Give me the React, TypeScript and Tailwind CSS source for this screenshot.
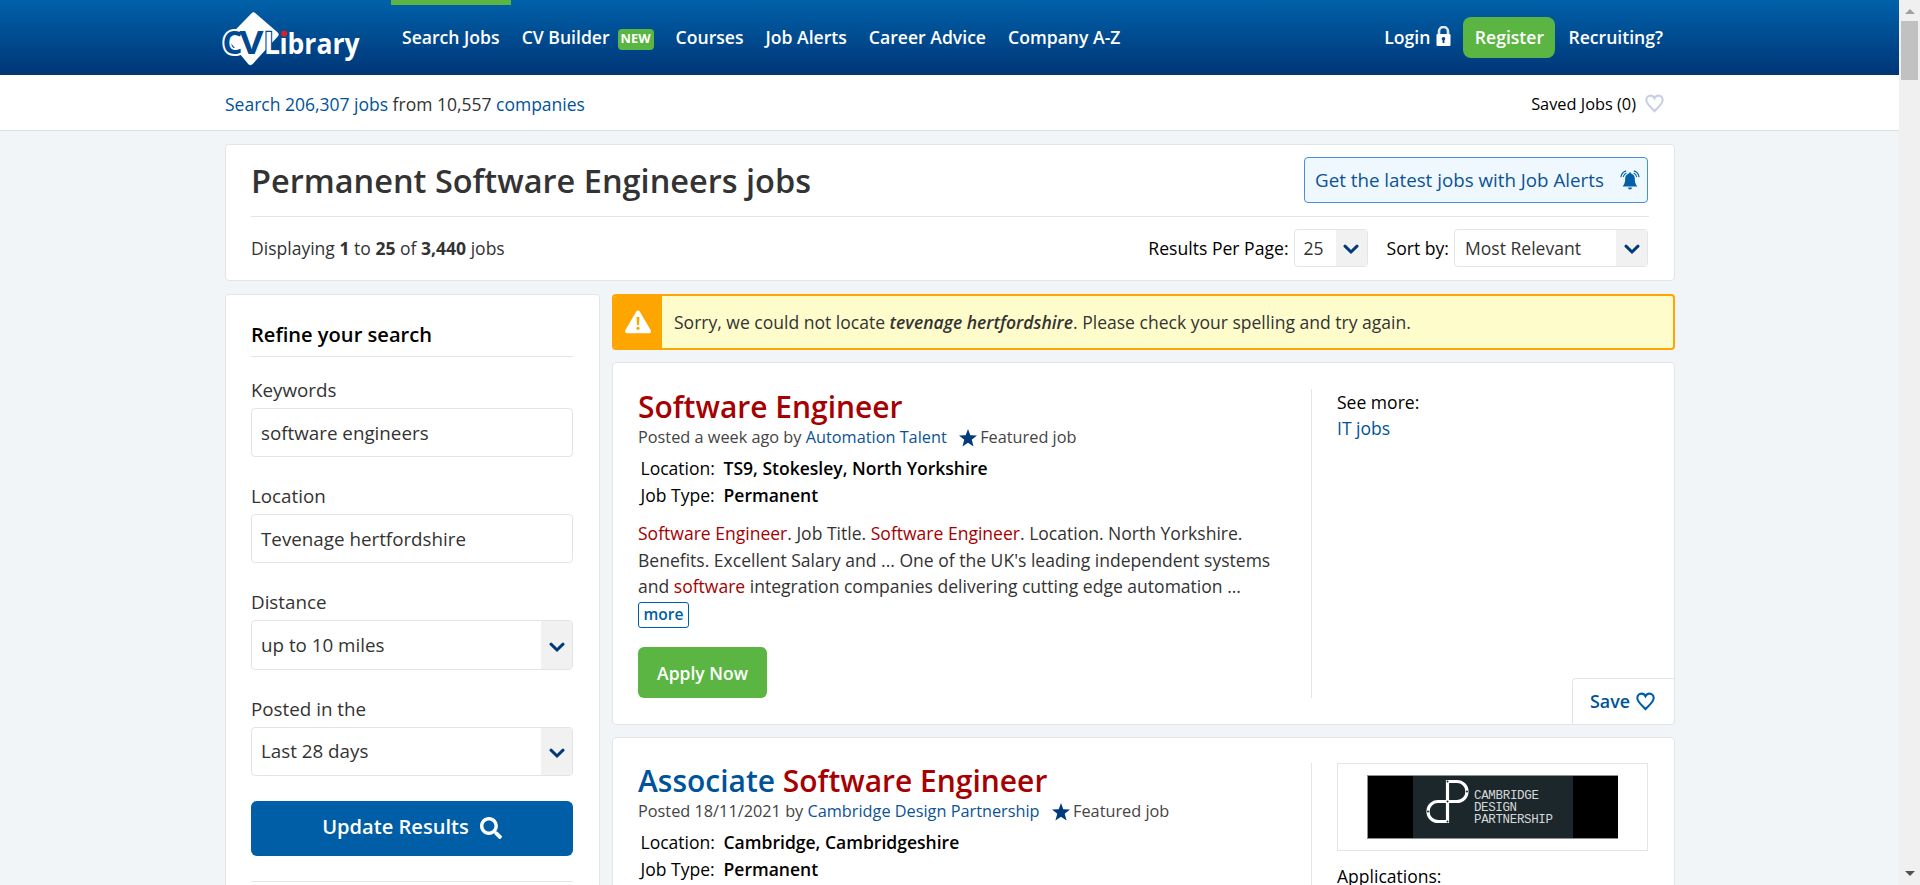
import type { ReactNode } from 'react';
import { FaSearch } from 'react-icons/fa';

function Logo() {
  return (
    <svg width="144" height="62" viewBox="0 0 144 62" className="block" fontFamily="'Open Sans', sans-serif">
      <path d="M32.5 8.5 L54.5 27.5 L29.5 55 L10 31.5 Z" fill="#fff" stroke="#fff" strokeWidth="6" strokeLinejoin="round" />
      <text x="1.5" y="46.5" fontSize="32" fontWeight="700" textLength="20" lengthAdjust="spacingAndGlyphs" fill="#00498f" stroke="#fff" strokeWidth="4" paintOrder="stroke">C</text>
      <text x="18.5" y="46.5" fontSize="32" fontWeight="700" textLength="24" lengthAdjust="spacingAndGlyphs" fill="#00498f">V</text>
      <text x="43" y="46.5" fontSize="30" fontWeight="700" textLength="16" lengthAdjust="spacingAndGlyphs" fill="#fff" stroke="#004a90" strokeWidth="2.5" paintOrder="stroke">L</text>
      <text x="58.5" y="46.5" fontSize="28" fontWeight="700" textLength="80" lengthAdjust="spacingAndGlyphs" fill="#fff">ibrary</text>
      <circle cx="63.2" cy="26.6" r="3.6" fill="#e01e26" stroke="#004e93" strokeWidth="1" />
    </svg>
  );
}

function LockIcon() {
  return (
    <svg width="15" height="20" viewBox="0 0 15 20" className="block">
      <path d="M3 9 V5.5 a4.5 4.5 0 0 1 9 0 V9" fill="none" stroke="#dfe9f4" strokeWidth="2.6" />
      <rect x="0.5" y="8" width="14" height="12" rx="1.2" fill="#fff" />
      <circle cx="7.5" cy="12.8" r="1.8" fill="#00458a" />
      <path d="M6.6 13 h1.8 v4 h-1.8 z" fill="#00458a" />
    </svg>
  );
}

function HeartIcon({ color, size }: { color: string; size: number }) {
  return (
    <svg width={size} height={size} viewBox="0 0 20 20" className="block" fill="none" stroke={color} strokeWidth="2.2">
      <path d="M10 18 C7.5 14.8 1.4 11 1.4 6.4 C1.4 3.6 3.5 1.7 5.8 1.7 C7.8 1.7 9.2 2.8 10 4.4 C10.8 2.8 12.2 1.7 14.2 1.7 C16.5 1.7 18.6 3.6 18.6 6.4 C18.6 11 12.5 14.8 10 18 Z" />
    </svg>
  );
}

function BellIcon() {
  return (
    <svg width="20" height="20" viewBox="0 0 20 20" className="block">
      <path d="M10 2.6 c.8 0 1.3.5 1.4 1.1 c2.3.6 3.4 2.5 3.4 4.9 c0 4.3 1 5.9 2.6 7.9 H2.6 c1.6-2 2.6-3.6 2.6-7.9 c0-2.4 1.1-4.3 3.4-4.9 c.1-.6.6-1.1 1.4-1.1z" fill="#0060a8" />
      <path d="M8 17.6 h4 a2 2 0 0 1 -4 0z" fill="#0060a8" />
      <path d="M0.9 7.2 C1.3 4 3 1.8 6.2 0.9 M3.2 7 C3.6 5 4.6 3.7 6.4 2.9 M19.1 7.2 C18.7 4 17 1.8 13.8 0.9 M16.8 7 C16.4 5 15.4 3.7 13.6 2.9" fill="none" stroke="#0060a8" strokeWidth="1.1" />
    </svg>
  );
}

function WarningIcon() {
  return (
    <svg width="26" height="24" viewBox="0 0 26 24" className="block">
      <path d="M13 2.5 L24 21.2 H2 Z" fill="#fff" stroke="#fff" strokeWidth="4" strokeLinejoin="round" />
      <path d="M11.5 7 h3 l-.5 8 h-2 z" fill="#ffa500" />
      <circle cx="13" cy="18.3" r="1.6" fill="#ffa500" />
    </svg>
  );
}

function StarIcon() {
  return (
    <svg width="18" height="18" viewBox="0 0 18 18" className="block">
      <path d="M9 0 L11.3 6.3 L18 6.6 L12.7 10.8 L14.6 17.6 L9 13.7 L3.4 17.6 L5.3 10.8 L0 6.6 L6.7 6.3 Z" fill="#003a7b" />
    </svg>
  );
}

function Chevron() {
  return (
    <svg width="16" height="11" viewBox="0 0 16 11" className="mt-1 block">
      <path d="M2 2.2 L8 8 L14 2.2" fill="none" stroke="#003a7b" strokeWidth="3" strokeLinecap="round" />
    </svg>
  );
}

function Divider() {
  return <div className="h-px shrink-0 bg-[#e2e4e8]" />;
}

function Select({ value, className, arrow }: { value: string; className: string; arrow: string }) {
  return (
    <div className={'flex overflow-hidden rounded-[4px] border border-[#e2e4e8] bg-white text-[#333] ' + className}>
      <span className="flex flex-1 items-center whitespace-nowrap pt-px">{value}</span>
      <span className={'flex items-center justify-center bg-[#f1f1f1] ' + arrow}>
        <Chevron />
      </span>
    </div>
  );
}

function Field({ label, children }: { label: string; children: ReactNode }) {
  return (
    <div className="flex flex-col text-[18.8px] text-[#333]">
      <label className="flex h-9 items-center">{label}</label>
      {children}
    </div>
  );
}

function NavItem({ children, active }: { children: ReactNode; active?: boolean }) {
  return (
    <a className={'flex h-full items-center px-[11px] ' + (active ? 'border-t-[5px] border-[#5bb543] pb-[5px]' : '')}>{children}</a>
  );
}

function Hl({ children }: { children: ReactNode }) {
  return <span className="text-[#a60000]">{children}</span>;
}

function JobHead({ title, posted, company, location }: { title: ReactNode; posted: string; company: string; location: string }) {
  return (
    <>
      <h2 className="flex h-9 items-center whitespace-pre text-[29.97px] font-semibold text-[#00539b]">{title}</h2>
      <div className="flex h-[25px] items-center whitespace-pre text-[16.3px] text-[#444]">
        <span>Posted {posted} by </span>
        <a className="text-[#0b5394]">{company}</a>
        <span className="ml-[12.5px] mr-[3px]">
          <StarIcon />
        </span>
        <span>Featured job</span>
      </div>
      <dl className="mt-[5px] grid grid-cols-[83px_1fr] pl-[2.5px] leading-[27px] text-black">
        <dt>Location:</dt>
        <dd className="font-semibold">{location}</dd>
        <dt>Job Type:</dt>
        <dd className="font-semibold">Permanent</dd>
      </dl>
    </>
  );
}

function CompanyLogo() {
  return (
    <div className="flex h-[88px] w-[311px] items-center justify-center border border-[#e2e4e8] pr-px">
      <svg width="251" height="64" viewBox="0 0 251 64" className="block">
        <rect width="251" height="64" fill="#000" />
        <rect x="46" width="160" height="64" fill="#1c272c" />
        <path d="M0 .5 H251 M0 63.5 H251 M.5 0 V64" stroke="#8b9092" />
        <path d="M80.5 46.5 V6.5 H90 a10 10 0 0 1 0 20 H71 a10 10 0 0 0 0 20 Z" fill="none" stroke="#fff" strokeWidth="3.2" />
        <g fill="#1c272c">
          <circle cx="80.5" cy="6.5" r="1" />
          <circle cx="80.5" cy="26.5" r="1" />
          <circle cx="80.5" cy="46.5" r="1" />
          <circle cx="100" cy="16.5" r="1" />
          <circle cx="61" cy="36.5" r="1" />
        </g>
        <g fill="#d5d8d9" fontFamily="'Liberation Mono', monospace" fontSize="12.5">
          <text x="107" y="24" textLength="65">CAMBRIDGE</text>
          <text x="107" y="36" textLength="43">DESIGN</text>
          <text x="107" y="48.3" textLength="79">PARTNERSHIP</text>
        </g>
      </svg>
    </div>
  );
}

function Scrollbar() {
  return (
    <div className="flex w-[21px] shrink-0 flex-col items-center justify-between bg-[#f0f0f0] pb-[9px] pt-[9px]">
      <div className="flex flex-col items-center gap-[7px]">
        <svg width="10" height="5" viewBox="0 0 10 5" className="block"><path d="M5 0 L10 5 H0 Z" fill="#a0a0a0" /></svg>
        <div className="h-[59px] w-[17px] bg-[#c1c1c1]" />
      </div>
      <svg width="10" height="5" viewBox="0 0 10 5" className="block"><path d="M5 5 L10 0 H0 Z" fill="#505050" /></svg>
    </div>
  );
}

export default function App() {
  return (
    <div className="flex h-[885px] w-[1920px] overflow-hidden bg-[#f1f5f8] font-['Open_Sans',sans-serif] text-[17.55px]">
      <div className="flex min-w-0 flex-1 flex-col">
        <header className="h-[75px] shrink-0 bg-linear-to-b from-[#0061a9] to-[#003677]">
          <div className="ml-[221px] flex h-full w-[1454px] items-center whitespace-nowrap text-[17.6px] font-semibold text-white">
            <div className="w-[170px]"><Logo /></div>
            <NavItem active>Search Jobs</NavItem>
            <NavItem>
              CV Builder
              <span className="ml-2 mt-[3px] flex h-[21px] w-9 items-center justify-center rounded-[4px] bg-[#5bb543] text-[12.8px] font-bold">NEW</span>
            </NavItem>
            <NavItem>Courses</NavItem>
            <NavItem>Job Alerts</NavItem>
            <NavItem>Career Advice</NavItem>
            <NavItem>Company A-Z</NavItem>
            <div className="ml-auto flex h-full items-center">
              <span className="mr-1.5">Login</span>
              <span className="-mt-[3px] mr-3"><LockIcon /></span>
              <a className="flex h-[41px] w-[92px] items-center justify-center rounded-lg bg-[#5bb543]">Register</a>
              <a className="ml-[13px] pr-[12px]">Recruiting?</a>
            </div>
          </div>
        </header>
        <div className="h-14 shrink-0 border-b border-[#dcdfe3] bg-white">
          <div className="ml-[225px] flex h-full w-[1450px] items-center justify-between pr-[11px] pt-[3px]">
            <p className="text-[17.5px] text-[#333]">
              <a className="text-[#00539b]">Search 206,307 jobs</a> from 10,557 <a className="text-[#00539b]">companies</a>
            </p>
            <div className="flex items-center gap-[9px] text-[16.35px] text-black">
              Saved Jobs (0)
              <HeartIcon color="#c9cfe2" size={19} />
            </div>
          </div>
        </div>

        <main className="ml-[225px] mt-[13px] flex w-[1450px] flex-col">
          <section className="flex h-[137px] flex-col rounded-[4px] border border-[#e2e4e8] bg-white px-[25px]">
            <div className="flex h-[71px] items-center justify-between pr-[1px]">
              <h1 className="pt-px text-[32.5px] font-semibold text-[#333]">Permanent Software Engineers jobs</h1>
              <a className="mb-0.5 flex h-[46px] w-[344px] items-center justify-between rounded-[4px] border border-[#4a8fdc] bg-[#f0f8ff] pl-2.5 pr-[7px] pt-px text-[18.75px] text-[#0b5394]">
                Get the latest jobs with Job Alerts
                <BellIcon />
              </a>
            </div>
            <Divider />
            <div className="flex h-[63px] items-center pr-[1px] text-black">
              <p className="text-[#333]">
                Displaying <b>1</b> to <b>25</b> of <b>3,440</b> jobs
              </p>
              <span className="ml-auto text-[17.6px]">Results Per Page:</span>
              <Select value="25" className="mb-0.5 ml-[5px] h-[38px] w-[74px] pl-[9px]" arrow="w-[31px]" />
              <span className="ml-[19px] text-[17.6px]">Sort by:</span>
              <Select value="Most Relevant" className="mb-0.5 ml-[5px] h-[38px] w-[194px] pl-2.5" arrow="w-[31px]" />
            </div>
          </section>

          <div className="mt-[13px] flex items-start gap-3">
            <aside className="flex h-[700px] w-[375px] flex-col rounded-[4px] border border-[#e2e4e8] bg-white px-[25px]">
              <h3 className="flex h-[61px] shrink-0 items-center pt-[19px] text-[20.1px] font-semibold text-black">Refine your search</h3>
              <div className="w-[322px]"><Divider /></div>
              <form className="mt-[15px] flex flex-col gap-[21px]">
                <Field label="Keywords">
                  <div className="flex h-[49px] w-[322px] items-center rounded-[4px] border border-[#e2e4e8] pl-[9px] pt-px">software engineers</div>
                </Field>
                <Field label="Location">
                  <div className="flex h-[49px] w-[322px] items-center rounded-[4px] border border-[#e2e4e8] pl-[9px] pt-px">Tevenage hertfordshire</div>
                </Field>
                <Field label="Distance">
                  <Select value="up to 10 miles" className="h-[50px] w-[322px] pb-px pl-[9px]" arrow="-mb-px w-[31px]" />
                </Field>
                <Field label="Posted in the">
                  <Select value="Last 28 days" className="h-[49px] w-[322px] pb-px pl-[9px]" arrow="-mb-px w-[31px]" />
                </Field>
              </form>
              <button className="mt-[25px] flex h-[55px] w-[322px] shrink-0 items-center justify-center gap-[11px] rounded-md bg-[#005ea6] pb-0.5 text-[20.1px] font-semibold text-white">
                Update Results
                <FaSearch size={22} />
              </button>
              <div className="mt-[25px] w-[322px]"><Divider /></div>
            </aside>

            <div className="flex w-[1063px] flex-col gap-3">
              <div className="flex h-14 overflow-hidden rounded-[4px] border-2 border-[#ffa500] bg-[#fffccc]">
                <div className="flex w-12 items-center justify-center bg-[#ffa500]"><WarningIcon /></div>
                <p className="flex items-center whitespace-pre pl-3 text-[#333]">
                  Sorry, we could not locate <b className="font-semibold italic">tevenage hertfordshire</b>. Please check your spelling and try again.
                </p>
              </div>

              <article className="flex h-[363px] rounded-[4px] border border-[#e2e4e8] bg-white pl-[25px]">
                <div className="flex w-[673px] flex-col pt-[26px]">
                  <JobHead title={<Hl>Software Engineer</Hl>} posted="a week ago" company="Automation Talent" location="TS9, Stokesley, North Yorkshire" />
                  <p className="mt-[11px] whitespace-nowrap leading-[26.6px] text-[#333]">
                    <Hl>Software Engineer</Hl>. Job Title. <Hl>Software Engineer</Hl>. Location. North Yorkshire.<br />
                    Benefits. Excellent Salary and ... One of the UK's leading independent systems<br />
                    and <Hl>software</Hl> integration companies delivering cutting edge automation ...
                  </p>
                  <a className="mt-0.5 flex h-[26px] w-[51px] items-center justify-center rounded-[3px] border border-[#005ea6] text-[15.5px] font-semibold text-[#005ea6]">more</a>
                  <a className="mt-[19px] flex h-[51px] w-[129px] items-center justify-center rounded-md bg-[#5bb543] pt-0.5 text-[17.5px] font-semibold text-white">Apply Now</a>
                </div>
                <div className="mt-[26px] h-[309px] w-px bg-[#e2e4e8]" />
                <div className="flex flex-1 flex-col pt-[26px]">
                  <div className="pl-[25px] leading-[26.4px]">
                    <p className="text-black">See more:</p>
                    <a className="text-[#00539b]">IT jobs</a>
                  </div>
                  <a className="ml-auto mt-auto flex h-[46px] w-[102px] items-center gap-1.5 rounded-tl-[4px] border-l border-t border-[#e2e4e8] pl-[17px] text-[17.9px] font-semibold text-[#00539b]">
                    Save
                    <HeartIcon color="#005ea6" size={19} />
                  </a>
                </div>
              </article>

              <article className="flex h-[363px] rounded-[4px] border border-[#e2e4e8] bg-white pl-[25px]">
                <div className="flex w-[673px] flex-col pt-[25px]">
                  <JobHead title={<>Associate <Hl>Software Engineer</Hl></>} posted="18/11/2021" company="Cambridge Design Partnership" location="Cambridge, Cambridgeshire" />
                </div>
                <div className="mt-[25px] h-[310px] w-px bg-[#e2e4e8]" />
                <div className="flex flex-1 flex-col pl-[25px] pt-[25px]">
                  <CompanyLogo />
                  <p className="mt-3 leading-[26.6px] text-black">Applications:</p>
                </div>
              </article>
            </div>
          </div>
        </main>
      </div>
      <Scrollbar />
    </div>
  );
}
